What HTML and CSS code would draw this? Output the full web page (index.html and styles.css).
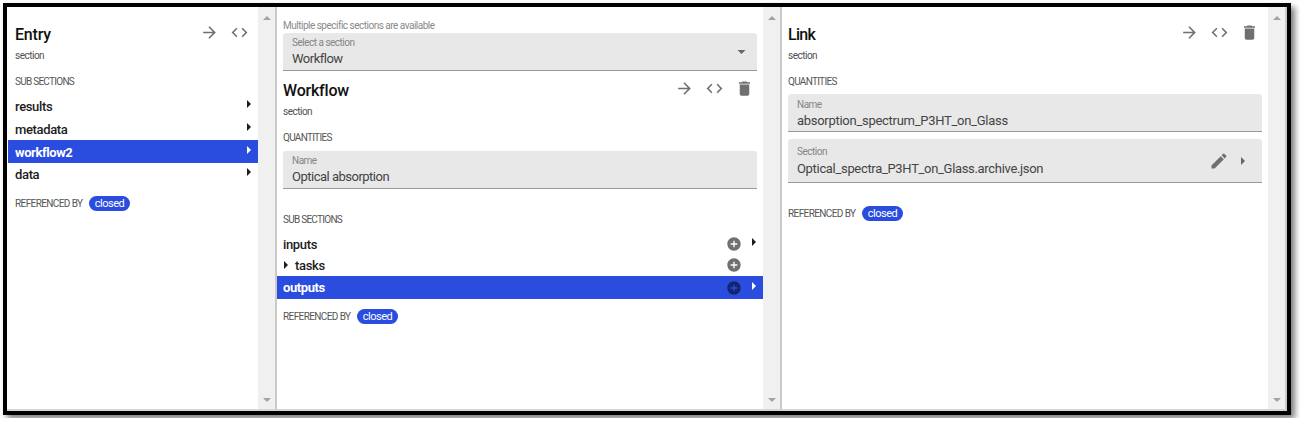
FILE: index.html
```html
<!DOCTYPE html>
<html lang="en">
<head>
<meta charset="utf-8">
<title>Archive browser</title>
<link rel="stylesheet" href="styles.css">
</head>
<body>
<svg class="defs" width="0" height="0">
  <symbol id="arrow" viewBox="0 0 24 24"><path d="M12 4l-1.41 1.41L16.17 11H4v2h12.17l-5.58 5.59L12 20l8-8z"/></symbol>
  <symbol id="code" viewBox="0 0 24 24"><path d="M9.4 16.6L4.8 12l4.6-4.6L8 6l-6 6 6 6 1.4-1.4zm5.2 0l4.6-4.6-4.6-4.6L16 6l6 6-6 6-1.4-1.4z"/></symbol>
  <symbol id="trash" viewBox="0 0 24 24"><path d="M6 19c0 1.1.9 2 2 2h8c1.1 0 2-.9 2-2V7H6v12zM19 4h-3.5l-1-1h-5l-1 1H5v2h14V4z"/></symbol>
  <symbol id="edit" viewBox="0 0 24 24"><path d="M3 17.25V21h3.75L17.81 9.94l-3.75-3.75L3 17.25zM20.71 7.04c.39-.39.39-1.02 0-1.41l-2.34-2.34a.9959.9959 0 0 0-1.41 0l-1.83 1.83 3.75 3.75 1.83-1.83z"/></symbol>
  <symbol id="add" viewBox="0 0 24 24"><path d="M12 2C6.48 2 2 6.48 2 12s4.48 10 10 10 10-4.48 10-10S17.52 2 12 2zm5 11h-4v4h-2v-4H7v-2h4V7h2v4h4v2z"/></symbol>
  <symbol id="right" viewBox="0 0 4 8"><path d="M0 0l4 4-4 4z"/></symbol>
  <symbol id="down" viewBox="0 0 8 4"><path d="M0 0h8l-4 4z"/></symbol>
  <symbol id="up" viewBox="0 0 8 4"><path d="M0 4h8l-4-4z"/></symbol>
</svg>
<main class="frame">
  <section class="lane lane-entry">
    <div class="content">
      <header class="head"><h2 class="t-entry">Entry</h2><svg class="icon"><use href="#arrow"/></svg><svg class="icon"><use href="#code"/></svg></header>
      <p class="kind">section</p>
      <h3 class="caption subs">Sub sections</h3>
      <div class="rows">
        <div class="row"><span>results</span><svg class="caret"><use href="#right"/></svg></div>
        <div class="row"><span>metadata</span><svg class="caret"><use href="#right"/></svg></div>
        <div class="row selected"><span>workflow2</span><svg class="caret"><use href="#right"/></svg></div>
        <div class="row"><span>data</span><svg class="caret"><use href="#right"/></svg></div>
      </div>
      <div class="refs"><span class="caption refby">Referenced by</span><span class="chip">closed</span></div>
    </div>
    <div class="scroll"><svg><use href="#up"/></svg><svg><use href="#down"/></svg></div>
  </section>
  <section class="lane lane-workflow">
    <div class="content">
      <p class="hint">Multiple specific sections are available</p>
      <div class="field select"><div class="texts"><label>Select a section</label><span class="value">Workflow</span></div><svg class="dropdown"><use href="#down"/></svg></div>
      <header class="head"><h2>Workflow</h2><svg class="icon"><use href="#arrow"/></svg><svg class="icon"><use href="#code"/></svg><svg class="icon"><use href="#trash"/></svg></header>
      <p class="kind">section</p>
      <h3 class="caption quant">Quantities</h3>
      <div class="field"><div class="texts"><label>Name</label><span class="value">Optical absorption</span></div></div>
      <h3 class="caption subs">Sub sections</h3>
      <div class="rows">
        <div class="row"><span>inputs</span><svg class="add"><use href="#add"/></svg><svg class="caret"><use href="#right"/></svg></div>
        <div class="row"><svg class="expand"><use href="#right"/></svg><span>tasks</span><svg class="add last"><use href="#add"/></svg></div>
        <div class="row selected"><span>outputs</span><svg class="add"><use href="#add"/></svg><svg class="caret"><use href="#right"/></svg></div>
      </div>
      <div class="refs"><span class="caption refby">Referenced by</span><span class="chip">closed</span></div>
    </div>
    <div class="scroll"><svg><use href="#up"/></svg><svg><use href="#down"/></svg></div>
  </section>
  <section class="lane lane-link">
    <div class="content">
      <header class="head"><h2 class="t-link">Link</h2><svg class="icon"><use href="#arrow"/></svg><svg class="icon"><use href="#code"/></svg><svg class="icon"><use href="#trash"/></svg></header>
      <p class="kind">section</p>
      <h3 class="caption quant">Quantities</h3>
      <div class="field"><div class="texts"><label>Name</label><span class="value">absorption_spectrum_P3HT_on_Glass</span></div></div>
      <div class="field reference"><div class="texts"><label>Section</label><span class="value">Optical_spectra_P3HT_on_Glass.archive.json</span></div><svg class="edit"><use href="#edit"/></svg><svg class="open"><use href="#right"/></svg></div>
      <div class="refs"><span class="caption refby">Referenced by</span><span class="chip">closed</span></div>
    </div>
    <div class="scroll"><svg><use href="#up"/></svg><svg><use href="#down"/></svg></div>
  </section>
</main>
</body>
</html>
```
FILE: styles.css
```css
* { box-sizing: border-box; }
body { margin: 0; background: #fff; font-family: Roboto, "Liberation Sans", sans-serif; color: #1c1c1c; overflow: hidden; }
h2, h3, p { margin: 0; }
svg { flex: none; fill: currentColor; }
.defs { display: none; }
.frame { display: flex; width: 1288px; height: 412px; margin: 3px; border: 4px solid #000; box-shadow: 4px 4px 6px rgba(0,0,0,.5); }
.lane { display: flex; border-right: 2px solid #cacaca; border-bottom: 2px solid #d3d7d4; }
.lane-entry { width: 270px; padding-left: 1px; }
.lane-workflow, .lane-link { width: 505px; }
.content { flex: 1; padding: 1px 6px 0; min-width: 0; }
.lane-entry .content { padding-left: 7px; }
.scroll { width: 17px; background: #f0f0f0; display: flex; flex-direction: column; align-items: center; justify-content: space-between; padding: 9px 0 7px; color: #a2a2a2; }
.scroll svg { width: 8px; height: 4px; }
.head { display: flex; align-items: center; height: 28px; padding-right: 3px; color: #707070; }
.lane-entry .head, .lane-link .head { margin-top: 12px; }
.head h2 { flex: 1; font-size: 16px; font-weight: 500; line-height: 28px; color: #111; white-space: nowrap; letter-spacing: -.2px; padding-top: 2px; }
.head .t-link { letter-spacing: -.7px; }
.icon { width: 19px; height: 19px; margin: 0 0 3px 11px; }
.kind { font-size: 10px; line-height: 14px; height: 14px; margin-top: 1px; color: #505050; letter-spacing: -.5px; }
.caption { font-size: 10px; font-weight: 400; line-height: 14px; text-transform: uppercase; color: #555; white-space: nowrap; }
.subs { letter-spacing: -.73px; }
.quant { letter-spacing: -.7px; }
.refby { letter-spacing: -.6px; width: 74px; padding-top: 1px; }
h3.caption { margin-top: 12px; }
.row { display: flex; align-items: center; height: 22.7px; margin: 0 -6px; padding: 0 6px; font-size: 13px; font-weight: 500; letter-spacing: -.35px; }
.row span { flex: 1; padding-top: 1px; white-space: nowrap; }
.row.selected { background: #2a4cdf; color: #fff; font-weight: 700; letter-spacing: -.4px; }
.lane-entry .row { margin-left: -7px; padding-left: 7px; }
.lane-entry .rows { margin-top: 6px; }
.caret { width: 4px; height: 8px; margin: 0 1px 4px 0; }
.lane-workflow .caret { margin-left: 10px; }
.lane-entry .refs { margin-top: 10px; }
.refs { display: flex; align-items: center; height: 15px; }
.chip { width: 41px; height: 15px; border-radius: 8px; background: #2a4cdf; color: #fff; font-size: 11px; line-height: 15px; text-align: center; letter-spacing: -.5px; }
.hint { margin-top: 11px; height: 14px; font-size: 10px; line-height: 14px; letter-spacing: -.5px; color: #8a8a8a; white-space: nowrap; }
.field { display: flex; align-items: center; height: 38px; padding: 0 11px 0 9px; background: #e8e8e8; border-bottom: 1px solid #9a9a9a; border-radius: 3px 3px 0 0; }
.texts { flex: 1; display: flex; flex-direction: column; height: 100%; padding-top: 4px; }
.texts label { font-size: 10px; line-height: 12px; letter-spacing: -.5px; color: #858585; }
.value { font-size: 13px; line-height: 20px; letter-spacing: -.5px; color: #444; white-space: nowrap; }
.dropdown { width: 9px; height: 4px; color: #666; }
.select { margin-bottom: 5px; }
.lane-workflow .quant { margin-top: 12px; }
.quant + .field { margin-top: 6px; }
.lane-link .quant + .field { margin-top: 5px; }
.lane-link .texts { padding-top: 5px; }
.lane-link .value { letter-spacing: -.28px; }
.lane-workflow .subs { margin-top: 24px; }
.lane-workflow .rows { margin-top: 6px; }
.lane-workflow .row { height: 21.5px; }
.lane-workflow .row.selected { height: 23px; }
.lane-workflow .row.selected span { padding-top: 0; }
.lane-workflow .refs { margin-top: 10px; }
.expand { width: 4px; height: 8px; margin: 0 7px 0 1px; }
.add { width: 16px; height: 16px; color: #707070; }
.add.last { margin-right: 15px; }
.selected .add { color: #14256f; }
.reference { height: 44px; margin-top: 7px; padding-right: 17px; }
.lane-link .reference .texts { padding-top: 7px; }
.lane-link .reference .value { line-height: 22px; letter-spacing: -.32px; }
.edit { width: 20px; height: 20px; color: #707070; margin-right: 12px; }
.open { width: 4px; height: 8px; color: #666; }
.lane-link .refs { margin-top: 23px; }
```
